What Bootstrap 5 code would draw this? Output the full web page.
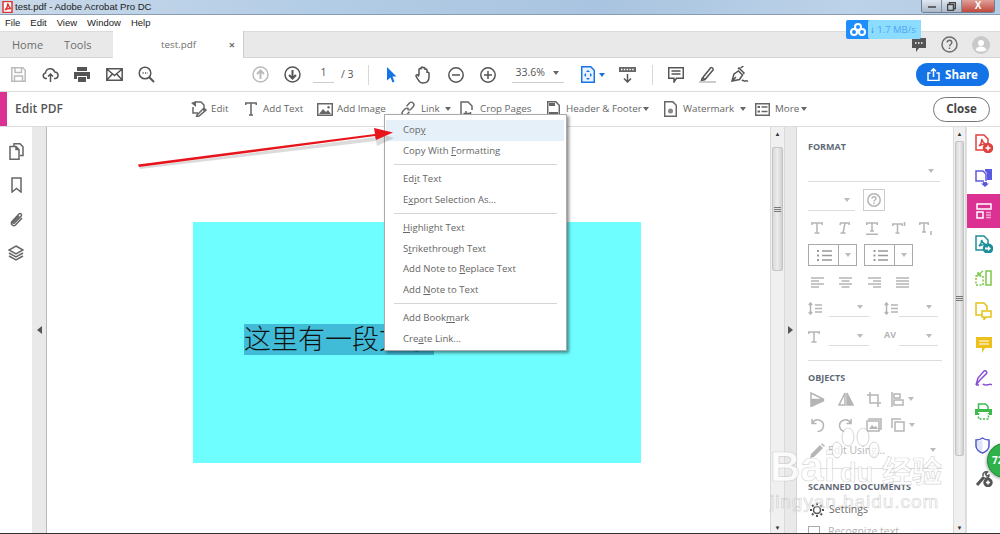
<!DOCTYPE html>
<html lang="en"><head><meta charset="utf-8"><title>test.pdf - Adobe Acrobat Pro DC</title>
<link href="https://cdn.jsdelivr.net/npm/bootstrap@5.3.0/dist/css/bootstrap.min.css" rel="stylesheet">
<style>
html,body{margin:0;height:534px;overflow:hidden;background:#fff}
body{font-family:"Open Sans","Noto Sans",sans-serif;font-size:10.5px;color:#555;position:relative;line-height:1.2}
svg{display:block;flex:none;fill:none;stroke:currentColor;stroke-width:1.5}
.app-title{height:15px;background:linear-gradient(100deg,#c9d9e9 0,#b4cde6 30%,#a9c4e0 60%,#bcd2e8 85%,#b3cbe4 100%);border-bottom:1px solid #8a9db2;font-family:"Liberation Sans",sans-serif;font-size:9.6px;color:#222;padding-left:2px}
.app-logo{color:#d33;margin-right:2px}
.win-btns{height:13px;margin-top:-1px;margin-right:5px;border:1px solid #6f7f90;border-top:0;border-radius:0 0 3px 3px;overflow:hidden}
.win-b{width:20px;height:12px;background:linear-gradient(#dfe7ef,#aab9c8);border-right:1px solid #7f8ea0;color:#444}
.win-x{width:32px;height:12px;background:linear-gradient(#e0a097,#c0483c);color:#fff;font-size:10px;font-weight:700;line-height:12px;text-align:center}
.app-menu{height:16px;gap:10px;padding-left:5px;font-family:"Liberation Sans",sans-serif;font-size:9.5px;color:#222;background:#fff}
.app-tabs{height:27px;background:#e9e9e9;border-top:1px solid #dcdcdc;border-bottom:1px solid #d5d5d5;font-size:11px;color:#6e6e6e}
.tab-home{width:113px;gap:21px;padding-left:12px}
.tab-doc{width:131px;height:27px;background:#fff;border-right:1px solid #ccc;padding:0 8px 0 48px;font-size:9.8px}
.tab-x{margin-left:auto;font-weight:700;font-size:11px}
.tab-tools{margin-left:auto;margin-right:10px;gap:14px}
.tool-row{height:34px;background:#fff;border-bottom:1px solid #dcdcdc;padding-left:2px;color:#555}
.slot{width:32px;height:24px}
.muted-ic{color:#bbb}.blue-ic{color:#1473e6}
.w-sp7{width:7px}.w-sp8{width:8px}.w-sp14{width:14px}.w-sp82{width:82px}
.v-sep{width:1px;height:20px;background:#d8d8d8}
.pg-in{width:21px;border-bottom:1px solid #ccc;text-align:center;padding-bottom:3px;margin:0 7px 0 5px}
.zoom-sel{width:52px;border-bottom:1px solid #ccc;padding:0 5px 3px 4px;margin-left:8px}
.fit-b{width:28px;margin-left:17px;margin-right:3px}
.car{width:0;height:0;border:3px solid transparent;border-top:4px solid #666;border-bottom:0;flex:none}
.car-b{border-top-color:#1473e6}
.car-f{margin-left:-5px}.car-h{margin-left:-3px}
.share-b{width:73px;height:23px;background:#1473e6;color:#fff;font-size:11.5px;font-weight:700;border-radius:12px;gap:5px;margin-left:auto;margin-right:11px}
.edit-row{height:35px;background:#fff;border-bottom:1px solid #dcdcdc;color:#666;position:relative;font-size:9.8px}
.edit-flag{width:7px;height:34px;background:#db3193}
.edit-name{font-size:12px;font-weight:600;color:#555;margin-left:8px;width:176px}
.et{height:24px;white-space:nowrap}
.et-a{width:54px;gap:4px}.et-b{width:72px;gap:6px}.et-c{width:83px;gap:4px}.et-d{width:60px;gap:5px}.et-e{width:87px;gap:5px}.et-f{width:117px;gap:6px}.et-g{width:91px;gap:6px}.et-h{gap:5px}
.close-b{width:57px;height:25px;border:1px solid #777;border-radius:13px;color:#444;font-weight:700;font-size:11.5px;margin-left:auto;margin-right:10px}
.app-main{height:408px;background:#fff}
.left-rail{width:32px;color:#666;padding-top:7px}
.left-slot{height:34px}
.gut{width:14px;background:#e9e9e9;color:#555}
.gut-l{border-right:1px solid #b9b9b9;width:15px}
.gut-r{width:12px;border-right:1px solid #d5d5d5}
.gut svg{margin-top:-2px}
.doc-pane{width:723px;background:#fff;padding:95px 0 0 146px}
.cyan-page{width:448px;height:241px;background:#6ffeff;padding:102px 0 0 51px}
.sel-text{width:190px;height:31px;background:#41bcd8;color:#111;font-family:"Noto Sans CJK SC","Noto Sans CJK TC",sans-serif;font-size:27px;line-height:27px;white-space:nowrap;font-weight:300}
.sb{width:15px;background:#f0f0f0;border-left:1px solid #dadada;border-right:1px solid #dadada;height:408px}
.sb-nar{width:13px}
.sb-ar{height:14px;font-size:6px;color:#333;line-height:14px;text-align:center}
.sb-gap{height:6px}
.sb-th{background:linear-gradient(90deg,#d9d9d9,#ececec,#d0d0d0);border:1px solid #c4c4c4;border-radius:2px;margin:0 1px}
.th-a{height:124px}.th-b{height:315px}
.grip{width:7px;height:5px;border-top:1px solid #777;border-bottom:1px solid #777}
.grip::after{content:"";display:block;height:1px;background:#777;margin-top:1px}
.side-panel{width:156px;padding:0 13px 0 11px;overflow:hidden;color:#b5b5b5;height:408px}
.side-panel>*{flex:none}
.ph{font-size:9px;font-weight:700;color:#5f6a76;line-height:12px;white-space:nowrap}
.ph-a{margin-top:14px}.ph-b{margin-top:11px}.ph-c{margin-top:12px}
.pr{height:28px;margin-top:3px}.pr-a{margin-top:2px;height:28.5px}
.ps{width:28.5px}.ps-0{margin-left:-5px}
.uln{border-bottom:1px solid #ddd}
.font-sel{height:29px;padding:8px 6px 0 0}
.size-row{margin-top:7px;height:22px;gap:8px}
.size-sel{width:47px;padding-right:5px}
.help-box{width:22px;height:22px;border:1px solid #ccc}
.lst-row{gap:7px;height:22px;margin-top:2px}
.sq{border:1px solid #aaa;height:22px;width:49px}
.sq-d{width:18px;border-left:1px solid #aaa;height:20px}
.sq-ic{color:#999}
.pc{width:0;height:0;border:3px solid transparent;border-top:4px solid #bbb;border-bottom:0;flex:none}
.sp-row{height:28px;margin-top:1px}.sp-row2{height:22px;margin-top:1px}
.sp-sel{width:40px;height:19px;margin-left:7px;padding-right:6px}
.sp-sel2{width:39px;height:19px;margin-left:1px;padding-right:6px}
.sp-ic2{margin-left:15px}
.av-txt{margin-left:15px;width:14px;font-weight:700;font-size:9px;padding-top:3px}
.hr-a{height:1px;background:#ddd;margin-top:11px;width:134px}
.hr-b{height:1px;background:#ddd;margin-top:5px;width:134px}
.obj-a{margin-top:2px;height:27px}.obj-b{height:25px;margin-top:0}.obj-c{height:25px;margin-top:0}
.pen-ic{margin-left:2px}
.edit-using{margin-left:3px}
.pc-end{margin-left:auto;margin-right:4px}
.set-row{height:20px;margin-top:7px;color:#666}
.rec-row{height:20px;margin-top:2px}
.gear-ic{margin-left:2px;color:#555}
.set-t{margin-left:5px}
.chk{width:12px;height:12px;border:1px solid #aaa}
.rec-t{margin-left:8px}
.right-rail{width:34px;background:#fff;border-left:1px solid #e0e0e0;height:408px}
.rr{height:33.5px;width:100%}
.rr-on{background:#db3193;color:#fff}
.c-red{color:#e0413e}.c-ind{color:#5a5ae0}.c-teal{color:#1e8f9b}.c-lime{color:#7cc84a}.c-yel{color:#e3c214}.c-yel2{color:#ecc01d}.c-pur{color:#8a4fd8}.c-grn{color:#3dbb4c}.c-blu{color:#4f59c9;padding-left:8px}
.bot-edge{height:1px;background:#333}
.floating-menu{position:absolute;left:384px;top:114px;width:183px;height:237px;background:#fff;border:1px solid #aaa;box-shadow:2px 2px 3px rgba(0,0,0,.45);padding:5px 1px;color:#666;font-size:9.6px}
.mi{height:20.5px;padding-left:17px;line-height:20.5px;white-space:nowrap}
.mi-on{background:#e6f0f9;margin-right:1px}
.ms{height:1px;background:#d4d4d4;margin:3px 8px 4px 8px}
.pan-arrow{position:absolute;left:130px;top:120px;stroke:none}
.dl-pill{position:absolute;left:846px;top:20px;width:75px;height:19px;background:#1f8dfb;border-radius:2px;color:#fff}
.dl-in{width:53px;height:19px;margin-left:auto;background:#8bdcff;border-radius:2px;color:#4fa6ee;font-size:9.5px;white-space:nowrap;overflow:hidden;padding-left:2px;line-height:19px}
.dl-in b{color:#1a6fc0}
.dl-ic{stroke:#fff;stroke-width:2}
.green-dot{position:absolute;left:987px;top:443px;width:35px;height:35px;border-radius:50%;background:#2fb24a;border:1px solid #1a8a33;color:#fff;font-size:10px;font-weight:700;line-height:33px;padding-left:4px;box-shadow:-1px 1px 3px rgba(0,0,0,.3)}
.wm{position:absolute;left:770px;top:428px;width:190px;height:84px;color:rgba(255,255,255,.82);-webkit-text-stroke:.7px rgba(150,150,150,.4);font-family:"Liberation Sans",sans-serif;pointer-events:none}
.wm-a{position:absolute;left:0;top:18px;font-size:42px;font-weight:700;line-height:42px;white-space:nowrap}
.wm-du{position:absolute;left:70px;top:30px;font-size:27px;font-weight:700;line-height:30px}
.wm-b{position:absolute;left:112px;top:21px;font-size:30px;font-family:"Noto Sans CJK SC",sans-serif;font-weight:700;line-height:40px;white-space:nowrap}
.wm-c{position:absolute;left:0;top:63px;font-size:19px;line-height:22px;letter-spacing:.95px;white-space:nowrap;color:rgba(255,255,255,.5)}
.wm-paw{position:absolute;left:60px;top:0;stroke:rgba(150,150,150,.4);stroke-width:1;fill:rgba(255,255,255,.7)}
</style></head><body>

<div class="app-title d-flex align-items-center">
  <svg class="app-logo" width="11" height="12" viewBox="0 0 11 12" stroke-width="1"><path fill="#fff" d="M1 .5h9v11H1z"/><path d="M3 9c2-2 3-5 2.500-6.500C7 5 7 7 9 7.500 6 7 4.500 8 3 9z"/></svg>
  <span>test.pdf - Adobe Acrobat Pro DC</span>
  <div class="win-btns d-flex ms-auto">
    <div class="win-b d-flex align-items-end justify-content-center pb-1"><svg width="8" height="2"><path d="M0 1h8"/></svg></div>
    <div class="win-b d-flex align-items-center justify-content-center"><svg width="9" height="9" viewBox="0 0 9 9" stroke-width="1"><path d="M2.500 2.500v-2h6v6h-2M.5 2.500h6v6h-6z"/></svg></div>
    <div class="win-x">X</div>
  </div>
</div>

<div class="app-menu d-flex align-items-center"><span>File</span><span>Edit</span><span>View</span><span>Window</span><span>Help</span></div>

<div class="app-tabs d-flex align-items-center">
  <div class="tab-home d-flex"><span>Home</span><span>Tools</span></div>
  <div class="tab-doc d-flex align-items-center"><span>test.pdf</span><span class="tab-x">×</span></div>
  <div class="tab-tools d-flex align-items-center">
    <svg width="16" height="16" viewBox="0 0 16 16"><path fill="#555" stroke="none" d="M1 1h14v10H8l-3 4v-4H1z"/><path stroke="#fff" stroke-dasharray="1.500 1.500" d="M4 6h8"/></svg>
    <svg width="17" height="17" viewBox="0 0 17 17"><circle cx="8.500" cy="8.500" r="7.500"/><path d="M6.200 6.500c0-3 4.600-3 4.600 0 0 2-2.300 2-2.300 3.800M8.500 11.500v1.500"/></svg>
    <svg width="18" height="18" viewBox="0 0 18 18"><circle cx="9" cy="9" r="9" fill="#c9c9c9" stroke="none"/><circle cx="9" cy="7" r="3" fill="#fff" stroke="none"/><path fill="#fff" stroke="none" d="M3.500 14c1-3 3-3.500 5.500-3.500s4.500.5 5.500 3.500c-3 2-8 2-11 0z"/></svg>
  </div>
</div>

<div class="tool-row d-flex align-items-center">
  <div class="slot d-flex align-items-center justify-content-center muted-ic"><svg width="15" height="15" viewBox="0 0 15 15"><path d="M.8.800h11l2.400 2.400v11H.8zM4 1v4.500h6.500V1M3.500 14V9h8v5"/></svg></div>
  <div class="slot d-flex align-items-center justify-content-center"><svg width="17" height="16" viewBox="0 0 17 16"><path d="M5 11.500H3.500A2.800 2.800 0 0 1 3.500 6 4.800 4.800 0 0 1 12.800 5 3.300 3.300 0 0 1 13.500 11.500H12M8.500 15V7M6 9.500l2.500-2.500 2.500 2.500"/></svg></div>
  <div class="slot d-flex align-items-center justify-content-center"><svg width="16" height="15" viewBox="0 0 16 15"><path fill="currentColor" stroke="none" d="M3 0h10v4H3zM0 5h16v7h-3v-3H3v3H0zM4 10h8v5H4z"/></svg></div>
  <div class="slot d-flex align-items-center justify-content-center"><svg width="17" height="13" viewBox="0 0 17 13"><path d="M.8.800h15.400v11.400H.8zM.8 1l7.700 6.500L16.200 1M.8 12l5.500-6M16.200 12l-5.500-6"/></svg></div>
  <div class="slot d-flex align-items-center justify-content-center"><svg width="17" height="17" viewBox="0 0 17 17"><circle cx="7" cy="7" r="5.800"/><path stroke-width="2" d="M11 11l5 5"/><path stroke-dasharray="1.200 1.300" d="M4.500 7H10"/></svg></div>
  <div class="w-sp82"></div>
  <div class="slot d-flex align-items-center justify-content-center muted-ic"><svg width="17" height="17" viewBox="0 0 17 17"><circle cx="8.500" cy="8.500" r="7.500"/><path stroke-width="2" d="M8.500 13V4.500M5 8l3.500-3.500L12 8"/></svg></div>
  <div class="slot d-flex align-items-center justify-content-center"><svg width="17" height="17" viewBox="0 0 17 17"><circle cx="8.500" cy="8.500" r="7.500"/><path stroke-width="2" d="M8.500 4v8.500M5 9l3.500 3.500L12 9"/></svg></div>
  <div class="pg-in">1</div><span>/ 3</span>
  <div class="w-sp14"></div><div class="v-sep"></div><div class="w-sp7"></div>
  <div class="slot d-flex align-items-center justify-content-center blue-ic"><svg width="11" height="16" viewBox="0 0 11 16"><path fill="currentColor" stroke="none" d="M1 0l9.500 9.500H6.500l2 5-2 1-2-5L1 13.500z"/></svg></div>
  <div class="slot d-flex align-items-center justify-content-center"><svg width="17" height="18" viewBox="0 0 17 18" stroke-width="1.200"><path d="M4 9V3.500c0-1.500 2-1.500 2 0V2c0-1.500 2-1.500 2 0v.5c0-1.500 2-1.500 2 0V4c0-1.500 2-1.500 2 0v3c0-1 2-1 2 0v4c0 4-2.500 6-6 6-3 0-4-1.500-5-3.500L1.200 10.500c-.8-1.500 1-2.500 2-1.200L4 10.500"/></svg></div>
  <div class="slot d-flex align-items-center justify-content-center"><svg width="16" height="16" viewBox="0 0 16 16"><circle cx="8" cy="8" r="7.200"/><path d="M4 8h8"/></svg></div>
  <div class="slot d-flex align-items-center justify-content-center"><svg width="16" height="16" viewBox="0 0 16 16"><circle cx="8" cy="8" r="7.200"/><path d="M4 8h8M8 4v8"/></svg></div>
  <div class="zoom-sel d-flex align-items-center justify-content-between"><span>33.6%</span><span class="car"></span></div>
  <div class="fit-b d-flex align-items-center gap-1 blue-ic"><svg width="14" height="17" viewBox="0 0 14 17" stroke-width="1"><path fill="#e8f2fd" d="M.7.700h9l3.600 3.600v12H.7z"/><path fill="currentColor" stroke="none" d="M7 4l2 2H5zM7 14l2-2H5zM3 9l2-2v4zM11 9L9 7v4z"/></svg><span class="car car-b"></span></div>
  <div class="slot d-flex align-items-center justify-content-center"><svg width="17" height="17" viewBox="0 0 17 17" stroke-width="1.300"><path fill="#666" stroke="none" d="M0 1h17v5H0z"/><path stroke="#fff" stroke-dasharray="1.500 1.300" d="M2 3.500h13"/><path d="M8.500 8v8M5 12.500L8.500 16l3.500-3.500"/></svg></div>
  <div class="w-sp8"></div><div class="v-sep"></div><div class="w-sp7"></div>
  <div class="slot d-flex align-items-center justify-content-center"><svg width="16" height="16" viewBox="0 0 16 16" stroke-width="1.200"><path d="M.7.700h14.600v10.600H8.500L6 15v-3.700H.7zM3.500 4h9M3.500 7h9"/></svg></div>
  <div class="slot d-flex align-items-center justify-content-center"><svg width="17" height="17" viewBox="0 0 17 17" stroke-width="1.200"><path d="M3 12.500L11.500 2c1-1.200 3.500.5 2.500 2L6 13.500l-3.500 1zM3.500 11.500l2.500 2"/><path stroke="#ccc" stroke-width="2" d="M0 16h17"/></svg></div>
  <div class="slot d-flex align-items-center justify-content-center"><svg width="18" height="17" viewBox="0 0 18 17" stroke-width="1.200"><path d="M1 15l2-7 4.500-3 4 4-3 4.500zM1 15l4-4M7 3l1-1 5 5-1 1M9.500 2l3-2M11 15c1-2 2 1 3 0s1.500.5 3 0"/></svg></div>
  <div class="share-b d-flex align-items-center justify-content-center"><svg width="13" height="13" viewBox="0 0 13 13"><path d="M3.500 5H1v7.500h11V5H9.500M6.500 9V1M4 3.200L6.500.8 9 3.200"/></svg><span>Share</span></div>
</div>

<div class="edit-row d-flex align-items-center">
  <div class="edit-flag"></div><div class="edit-name">Edit PDF</div>
  <div class="et et-a d-flex align-items-center"><svg width="16" height="16" viewBox="0 0 16 16" stroke-width="1.200"><path fill="#666" stroke="none" d="M0 2l5-2v6z"/><path d="M4 1h6l3 3v6M2 6v6h5M6 14l7-7 2 2-7 6-2.500.5z"/></svg><span>Edit</span></div>
  <div class="et et-b d-flex align-items-center"><svg width="12" height="14" viewBox="0 0 12 14"><path d="M.8 3V1h10.400v2M6 1v12M4 13h4"/></svg><span>Add Text</span></div>
  <div class="et et-c d-flex align-items-center"><svg width="16" height="13" viewBox="0 0 16 13"><path d="M.7.700h14.600v11.600H.7z"/><path fill="currentColor" stroke="none" d="M2 11l4-5 3 3 2-2 3 4zM11.500 3a1.300 1.300 0 1 0 .1 0z"/></svg><span>Add Image</span></div>
  <div class="et et-d d-flex align-items-center"><svg width="16" height="16" viewBox="0 0 17 16"><path d="M7 5l3-3.300a2.500 2.500 0 0 1 4 0 2.700 2.700 0 0 1 0 3.800l-2.500 2.700a2.600 2.600 0 0 1-3.700 0M10 11l-3 3.300a2.500 2.500 0 0 1-4 0 2.700 2.700 0 0 1 0-3.800L5.500 7.800a2.600 2.600 0 0 1 3.700 0"/></svg><span>Link</span><span class="car"></span></div>
  <div class="et et-e d-flex align-items-center"><svg width="15" height="16" viewBox="0 0 15 16" stroke-width="1.200"><path d="M1 15V1h7l4 4v4M6 10v5M3.500 12.500h7M10.500 11v4"/></svg><span>Crop Pages</span></div>
  <div class="et et-f d-flex align-items-center"><svg width="13" height="16" viewBox="0 0 13 16" stroke-width="1.200"><path d="M.7.700h8l3.600 3.600v11H.7z"/><path fill="#666" stroke="none" d="M2 2h6v3H2zM2 11h9v3H2z"/></svg><span>Header &amp; Footer</span><span class="car car-f"></span></div>
  <div class="et et-g d-flex align-items-center"><svg width="13" height="16" viewBox="0 0 13 16" stroke-width="1.200"><path d="M.7.700h8l3.600 3.600v11H.7z"/><circle cx="6.500" cy="10" r="2.500" fill="#888" stroke="none"/></svg><span>Watermark</span><span class="car"></span></div>
  <div class="et et-h d-flex align-items-center"><svg width="15" height="13" viewBox="0 0 15 13" stroke-width="1.200"><path d="M.7.700h13.600v11.600H.7zM6.500 4h6M6.500 8.500h6"/><path stroke-width="2" d="M2.500 4h2.500M2.500 8.500h2.500"/></svg><span>More</span><span class="car car-h"></span></div>
  <div class="close-b d-flex align-items-center justify-content-center">Close</div>
</div>

<div class="app-main d-flex">
  <div class="left-rail d-flex flex-column align-items-center">
    <div class="left-slot d-flex align-items-center"><svg width="15" height="17" viewBox="0 0 15 17"><path d="M5 3V.8h6l3 3v8.700h-3M1 3.500h6l3 3v9.700H1zM7 3.500v3h3"/></svg></div>
    <div class="left-slot d-flex align-items-center"><svg width="11" height="16" viewBox="0 0 11 16" stroke-width="1.800"><path d="M1 1h9v14l-4.500-3.500L1 15z"/></svg></div>
    <div class="left-slot d-flex align-items-center"><svg width="15" height="17" viewBox="0 0 15 17"><path d="M13 7l-6.500 7c-2 2-5.500-1-3.500-3.500L10 3c1.500-1.500 3.500.5 2 2.200L5.500 12c-1 1-2-.2-1.300-1L10 5"/></svg></div>
    <div class="left-slot d-flex align-items-center"><svg width="16" height="16" viewBox="0 0 16 16" stroke-width="1.200"><path d="M8 1l7 4-7 4-7-4zM1 8l7 4 7-4M1 11l7 4 7-4"/></svg></div>
  </div>
  <div class="gut gut-l d-flex align-items-center justify-content-center"><svg width="5" height="8" viewBox="0 0 5 8"><path fill="#555" stroke="none" d="M5 0v8L0 4z"/></svg></div>
  <div class="doc-pane"><div class="cyan-page"><div class="sel-text">这里有一段文字</div></div></div>
  <div class="sb d-flex flex-column">
    <div class="sb-ar">▲</div><div class="sb-gap"></div>
    <div class="sb-th th-a d-flex align-items-center justify-content-center"><div class="grip"></div></div>
    <div class="flex-grow-1"></div><div class="sb-ar">▼</div>
  </div>
  <div class="gut gut-r d-flex align-items-center justify-content-center"><svg width="5" height="8" viewBox="0 0 5 8"><path fill="#555" stroke="none" d="M0 0v8l5-4z"/></svg></div>
  <div class="side-panel d-flex flex-column">
    <div class="ph ph-a">FORMAT</div>
    <div class="uln font-sel d-flex justify-content-end align-items-center"><span class="pc"></span></div>
    <div class="size-row d-flex">
      <div class="uln size-sel d-flex justify-content-end align-items-center"><span class="pc"></span></div>
      <div class="help-box d-flex align-items-center justify-content-center"><svg width="14" height="14" viewBox="0 0 14 14" stroke-width="1.100"><circle cx="7" cy="7" r="6.200"/><path d="M5 5.500c0-2.500 4-2.500 4 0 0 1.500-2 1.500-2 3M7 9.500V11"/></svg></div>
    </div>
    <div class="pr d-flex align-items-center">
      <div class="ps ps-0 d-flex justify-content-center"><svg width="12" height="12" viewBox="0 0 12 12" stroke-width="2"><path d="M.8 3V1h10.400v2M6 1v10M3.500 11h5"/></svg></div>
      <div class="ps d-flex justify-content-center"><svg width="12" height="12" viewBox="0 0 12 12" stroke-width="1.200"><path d="M2 3l.5-2h9L11 3M7 1L5 11M2.500 11h5"/></svg></div>
      <div class="ps d-flex justify-content-center"><svg width="12" height="13" viewBox="0 0 12 13" stroke-width="1.200"><path d="M.8 3V1h10.400v2M6 1v8M4 9h4M0 12.300h12"/></svg></div>
      <div class="ps d-flex justify-content-center"><svg width="14" height="12" viewBox="0 0 14 12" stroke-width="1.200"><path d="M.8 4V2h9.400v2M5.500 2v9M3.500 11h4M12.500 0v4"/></svg></div>
      <div class="ps d-flex justify-content-center"><svg width="14" height="13" viewBox="0 0 14 13" stroke-width="1.200"><path d="M.8 3V1h8.400v2M5 1v9M3 10h4M12 9v4"/></svg></div>
    </div>
    <div class="lst-row d-flex">
      <div class="sq d-flex align-items-center justify-content-between"><svg class="ms-2 sq-ic" width="15" height="13" viewBox="0 0 15 13" stroke-width="1.100"><path d="M5 2h10M5 6.500h10M5 11h10"/><path stroke-width="2" stroke-dasharray="2 2.500" d="M1 1v11"/></svg><div class="sq-d d-flex align-items-center justify-content-center"><span class="pc"></span></div></div>
      <div class="sq d-flex align-items-center justify-content-between"><svg class="ms-2 sq-ic" width="15" height="13" viewBox="0 0 15 13" stroke-width="1.100"><path d="M5 2h10M5 6.500h10M5 11h10"/><path stroke-dasharray="2 2.500" stroke-width="2" d="M1.500 1v11"/></svg><div class="sq-d d-flex align-items-center justify-content-center"><span class="pc"></span></div></div>
    </div>
    <div class="pr pr-a d-flex align-items-center">
      <div class="ps ps-0 d-flex justify-content-center"><svg width="13" height="11" viewBox="0 0 13 11" stroke-width="1.100"><path d="M0 1h13M0 4h8M0 7h13M0 10h8"/></svg></div>
      <div class="ps d-flex justify-content-center"><svg width="13" height="11" viewBox="0 0 13 11" stroke-width="1.100"><path d="M0 1h13M2.500 4h8M0 7h13M2.500 10h8"/></svg></div>
      <div class="ps d-flex justify-content-center"><svg width="13" height="11" viewBox="0 0 13 11" stroke-width="1.100"><path d="M0 1h13M5 4h8M0 7h13M5 10h8"/></svg></div>
      <div class="ps d-flex justify-content-center"><svg width="13" height="11" viewBox="0 0 13 11" stroke-width="1.100"><path d="M0 1h13M0 4h13M0 7h13M0 10h13"/></svg></div>
    </div>
    <div class="sp-row d-flex align-items-start">
      <svg width="14" height="13" viewBox="0 0 14 13" class="mt-1" stroke-width="1.100"><path d="M2.500 1v11M.8 3l1.700-2 1.700 2M.8 10l1.700 2 1.700-2M7 3h7M7 6.500h7M7 10h7"/></svg>
      <div class="uln sp-sel d-flex justify-content-end align-items-center"><span class="pc"></span></div>
      <svg width="14" height="13" viewBox="0 0 14 13" class="mt-1 sp-ic2" stroke-width="1.100"><path d="M2.500 1v11M.8 3l1.700-2 1.700 2M.8 10l1.700 2 1.700-2M7 3h7M7 6.500h7M7 10h7"/></svg>
      <div class="uln sp-sel2 d-flex justify-content-end align-items-center"><span class="pc"></span></div>
    </div>
    <div class="sp-row2 d-flex align-items-start">
      <svg width="14" height="12" viewBox="0 0 14 12" class="mt-1" stroke-width="2"><path d="M.8 3V1h10.400v2M6 1v10M3.500 11h5"/></svg>
      <div class="uln sp-sel d-flex justify-content-end align-items-center"><span class="pc"></span></div>
      <span class="av-txt">AV</span>
      <div class="uln sp-sel2 d-flex justify-content-end align-items-center"><span class="pc"></span></div>
    </div>
    <div class="hr-a"></div>
    <div class="ph ph-b">OBJECTS</div>
    <div class="pr obj-a d-flex align-items-center">
      <div class="ps ps-0 d-flex justify-content-center"><svg width="15" height="15" viewBox="0 0 15 15" stroke-width="1.100"><path d="M1 1l13 6.500H1z"/><path fill="currentColor" d="M1 8.500h13L1 14.500z"/></svg></div>
      <div class="ps d-flex justify-content-center"><svg width="16" height="14" viewBox="0 0 16 14" stroke-width="1.100"><path d="M7 1v12H1z"/><path fill="currentColor" d="M9 1v12h6z"/></svg></div>
      <div class="ps d-flex justify-content-center"><svg width="15" height="15" viewBox="0 0 15 15" stroke-width="1.700"><path d="M3 0v11h11M0 3h11v12"/></svg></div>
      <div class="ps d-flex justify-content-center align-items-center gap-1"><svg width="13" height="15" viewBox="0 0 13 15" stroke-width="1.200"><path d="M1 0v15M3 2h6v4H3zM3 8h9v5H3z"/></svg><span class="pc"></span></div>
    </div>
    <div class="pr obj-b d-flex align-items-center">
      <div class="ps ps-0 d-flex justify-content-center"><svg width="15" height="15" viewBox="0 0 15 15"><path d="M2.500 5A5.800 5.800 0 1 1 7.500 13.500M2 1v4.500h4.500"/></svg></div>
      <div class="ps d-flex justify-content-center"><svg width="15" height="15" viewBox="0 0 15 15"><path d="M12.500 5A5.800 5.800 0 1 0 7.500 13.500M13 1v4.500H8.500"/></svg></div>
      <div class="ps d-flex justify-content-center"><svg width="16" height="15" viewBox="0 0 16 15" stroke-width="1.200"><path d="M3 2V1h12v10h-2M1 3h12v10H1z"/><path fill="currentColor" stroke="none" d="M3 11l3-4 2 2 2-1 2 3z"/></svg></div>
      <div class="ps d-flex justify-content-center align-items-center gap-1"><svg width="14" height="14" viewBox="0 0 14 14" stroke-width="1.300"><path d="M1 10V1h9M4 4h9v9H4z"/></svg><span class="pc"></span></div>
    </div>
    <div class="pr obj-c d-flex align-items-center">
      <svg class="pen-ic" width="15" height="15" viewBox="0 0 15 15"><path fill="currentColor" stroke="none" d="M0 15l1-4L10 2l3 3-9 9zM11 1l1-1 3 3-1 1z"/></svg>
      <span class="edit-using">Edit Using...</span><span class="pc pc-end"></span>
    </div>
    <div class="hr-b"></div>
    <div class="ph ph-c">SCANNED DOCUMENTS</div>
    <div class="set-row d-flex align-items-center"><svg class="gear-ic" width="14" height="14" viewBox="0 0 14 14" stroke-width="2.500"><circle cx="7" cy="7" r="3.500"/><path stroke-width="2" d="M7 0v2M7 12v2M0 7h2M12 7h2M2 2l1.500 1.500M10.500 10.500L12 12M2 12l1.500-1.500M10.500 3.500L12 2"/></svg><span class="set-t">Settings</span></div>
    <div class="rec-row d-flex align-items-center"><span class="chk"></span><span class="rec-t">Recognize text</span></div>
  </div>
  <div class="sb sb-nar d-flex flex-column">
    <div class="sb-ar">▲</div>
    <div class="sb-th th-b d-flex align-items-center justify-content-center"><div class="grip"></div></div>
    <div class="flex-grow-1"></div><div class="sb-ar">▼</div>
  </div>
  <div class="right-rail d-flex flex-column align-items-center">
    <div class="rr c-red d-flex align-items-center justify-content-center"><svg width="18" height="19" viewBox="0 0 18 19" stroke-width="1.200"><path d="M10 16H1V1h8l4 4v4"/><path d="M4 12c2-2 3-5 2.500-7 1 3 2 4 4 5-2.500 0-4.500.5-6.500 2z"/><circle cx="13" cy="14" r="4.500" fill="#e0413e"/><path stroke="#fff" d="M13 11.500v5M10.500 14h5"/></svg></div>
    <div class="rr c-ind d-flex align-items-center justify-content-center"><svg width="18" height="19" viewBox="0 0 18 19" stroke-width="1.200"><path d="M9 13H1V3h7l3 3v7"/><path fill="currentColor" stroke="none" d="M10 1h7v11h-5V5l-2-2zM8 14h4v1.500h2L10 19l-4-3.500h2z"/></svg></div>
    <div class="rr rr-on d-flex align-items-center justify-content-center"><svg width="16" height="16" viewBox="0 0 16 16" stroke-width="1.200"><path d="M1 1h14v5H1zM1 9h6v6H1z"/><path d="M10 9.500h5M10 12h5M10 14.500h5" stroke="#f0a5cf"/></svg></div>
    <div class="rr c-teal d-flex align-items-center justify-content-center"><svg width="18" height="18" viewBox="0 0 18 18" stroke-width="1.200"><path d="M9 15H1V1h8l4 4v4"/><path d="M4 11c2-2 3-4 2.500-6 1 3 2 4 4 4.500-2.500 0-4.500.5-6.500 1.500z"/><circle cx="13" cy="13.500" r="4.500" fill="currentColor"/><path fill="#fff" stroke="none" d="M10 12.500h3V11l3 2.500-3 2.500v-1.500h-3z"/></svg></div>
    <div class="rr c-lime d-flex align-items-center justify-content-center"><svg width="17" height="16" viewBox="0 0 17 16" stroke-width="1.400"><path d="M11 1h5v14h-5z"/><path stroke-dasharray="2 1.500" d="M1 6h7v9H1z"/><path d="M8 1L3 5M3 2v3h3"/></svg></div>
    <div class="rr c-yel d-flex align-items-center justify-content-center"><svg width="17" height="18" viewBox="0 0 17 18" stroke-width="1.300"><path d="M9 13H1V1h8l3 3v4"/><path fill="#fff" d="M7 9h9v6h-5l-2 2.500V15H7z"/></svg></div>
    <div class="rr c-yel2 d-flex align-items-center justify-content-center"><svg width="16" height="16" viewBox="0 0 16 16"><path fill="currentColor" stroke="none" d="M0 0h16v11H9l-3 5v-5H0z"/><path stroke="#fff" stroke-width="1.200" d="M3 4h10M3 7h10"/></svg></div>
    <div class="rr c-pur d-flex align-items-center justify-content-center"><svg width="18" height="16" viewBox="0 0 18 16"><path d="M1 15l2-7 6-7c1.500-1 3.500 1 2.500 2.500L5 10zM1 15h3M8 15c1-2 2 1 3 0s2 .5 3-.5 1 .5 3 0"/></svg></div>
    <div class="rr c-grn d-flex align-items-center justify-content-center"><svg width="17" height="17" viewBox="0 0 17 17"><path fill="currentColor" stroke="none" d="M0 6h17v6h-3V9H3v3H0z"/><path d="M3.500 6V1h7l2.500 2.500V6"/><path stroke-dasharray="2 1.500" d="M3.500 10v6h10v-6"/></svg></div>
    <div class="rr c-blu d-flex align-items-center"><svg width="15" height="17" viewBox="0 0 15 17"><path d="M7.500 1c2 1.500 4 2 6.500 2v6c0 3-3 6-6.500 7C4 15 1 12 1 9V3c2.500 0 4.500-.5 6.500-2z"/><path fill="#dfe3fa" stroke="none" d="M7.500 2.500v12.200C5 14 2 11.500 2 9V4c2 0 4-.5 5.500-1.500z"/></svg></div>
    <div class="rr d-flex align-items-center justify-content-center"><svg width="18" height="17" viewBox="0 0 18 17"><path stroke-width="3" d="M2 15l7-8"/><path d="M8 6c-.5-3 2-5 4.500-4L10.500 4l1.500 2 2-1c.5 2.500-2.500 4-4.500 3"/><circle cx="13" cy="12.500" r="4" fill="#555"/><path stroke="#fff" d="M13 10.500v4M11 12.500h4"/></svg></div>
  </div>
</div>
<div class="bot-edge position-absolute start-0 end-0 bottom-0"></div>

<div class="floating-menu">
  <div class="mi mi-on">Cop<u>y</u></div><div class="mi">Copy With <u>F</u>ormatting</div>
  <div class="ms"></div>
  <div class="mi">Ed<u>i</u>t Text</div><div class="mi">E<u>x</u>port Selection As...</div>
  <div class="ms"></div>
  <div class="mi"><u>H</u>ighlight Text</div><div class="mi">S<u>t</u>rikethrough Text</div><div class="mi">Add Note to <u>R</u>eplace Text</div><div class="mi">Add <u>N</u>ote to Text</div>
  <div class="ms"></div>
  <div class="mi">Add Book<u>m</u>ark</div><div class="mi">Cre<u>a</u>te Link...</div>
</div>

<svg class="pan-arrow" width="265" height="55" viewBox="0 0 265 55"><path fill="rgba(0,0,0,.14)" d="M9 47L246 17l-1-5 19 6-17 8-1-5L10 49z"/><path fill="#e8141c" d="M8 44.500L245 14l-1-6 19 4.500-17 7.500-1-4L9 47z"/></svg>

<div class="dl-pill d-flex align-items-center">
  <svg class="ms-1 dl-ic" width="16" height="13" viewBox="0 0 16 13"><circle cx="8" cy="4" r="3"/><circle cx="4" cy="9" r="3"/><circle cx="12" cy="9" r="3"/></svg>
  <div class="dl-in"><b>↓</b> 1.7 MB/s</div>
</div>
<div class="green-dot">72</div>
<div class="wm">
  <svg class="wm-paw" width="68" height="60" viewBox="0 0 68 60"><ellipse cx="7" cy="22" rx="5" ry="8"/><ellipse cx="18" cy="9" rx="6" ry="9"/><ellipse cx="33" cy="9" rx="6" ry="9"/><ellipse cx="44" cy="22" rx="5" ry="8"/></svg>
  <div class="wm-a">Bai</div><div class="wm-du">du</div>
  <div class="wm-b">经验</div>
  <div class="wm-c">jingyan.baidu.com</div>
</div>
<script src="https://cdn.jsdelivr.net/npm/bootstrap@5.3.0/dist/js/bootstrap.bundle.min.js"></script>
</body></html>
